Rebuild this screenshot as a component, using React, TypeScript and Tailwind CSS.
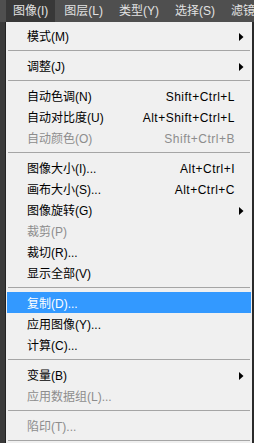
type Item = { label: string; shortcut?: string; sub?: boolean; disabled?: boolean; active?: boolean };

const groups: Item[][] = [
  [{ label: "模式(M)", sub: true }],
  [{ label: "调整(J)", sub: true }],
  [
    { label: "自动色调(N)", shortcut: "Shift+Ctrl+L" },
    { label: "自动对比度(U)", shortcut: "Alt+Shift+Ctrl+L" },
    { label: "自动颜色(O)", shortcut: "Shift+Ctrl+B", disabled: true },
  ],
  [
    { label: "图像大小(I)...", shortcut: "Alt+Ctrl+I" },
    { label: "画布大小(S)...", shortcut: "Alt+Ctrl+C" },
    { label: "图像旋转(G)", sub: true },
    { label: "裁剪(P)", disabled: true },
    { label: "裁切(R)..." },
    { label: "显示全部(V)" },
  ],
  [
    { label: "复制(D)...", active: true },
    { label: "应用图像(Y)..." },
    { label: "计算(C)..." },
  ],
  [
    { label: "变量(B)", sub: true },
    { label: "应用数据组(L)...", disabled: true },
  ],
  [{ label: "陷印(T)...", disabled: true }],
];

const tabs = ["图像(I)", "图层(L)", "类型(Y)", "选择(S)", "滤镜"];

function Arrow() {
  return (
    <svg width="5" height="8" viewBox="0 0 5 8" className="block">
      <path d="M0 0 L4.5 4 L0 8 Z" fill="#000" />
    </svg>
  );
}

function Row({ item }: { item: Item }) {
  const color = item.active ? "text-white" : item.disabled ? "text-[#8d8d8d]" : "text-[#000]";
  return (
    <div
      className={`mx-[1px] h-[21px] flex items-center pt-[2px] ${color} ${item.active ? "bg-[#3399ff]" : ""}`}
    >
      <span className="pl-[20px] flex-1 whitespace-nowrap">{item.label}</span>
      {item.shortcut && <span className="whitespace-nowrap tracking-[0.5px]">{item.shortcut}</span>}
      <span className="w-[16px] flex pl-[4px]">{item.sub && <Arrow />}</span>
    </div>
  );
}

function Separator() {
  return (
    <div className="h-[9px] flex items-center px-[2px]">
      <div className="h-px w-full bg-[#a5a5a5]" />
    </div>
  );
}

export default function App() {
  return (
    <div
      className="w-[254px] h-[443px] overflow-hidden bg-[#2c2c2c] text-[12px] leading-none"
      style={{ fontFamily: '"Liberation Sans", "Noto Sans CJK SC", sans-serif' }}
    >
      {/* menu bar */}
      <div className="h-[22px] bg-[#4f4f4f] flex pl-[6px] text-[#e2e2e2] whitespace-nowrap">
        {tabs.map((t, i) => (
          <div
            key={t}
            className={`h-full flex items-center px-[7px] mr-[2px] ${i === 0 ? "bg-[#383838]" : ""}`}
          >
            {t}
          </div>
        ))}
      </div>

      <div className="flex h-[421px]">
        <div className="w-[6px] bg-[#3a3a3a] border-r border-[#222]" />
        <div className="w-[246px] bg-[#f0f0f0] pt-[3px]">
          {groups.map((g, gi) => (
            <div key={gi}>
              {g.map((it) => (
                <Row key={it.label} item={it} />
              ))}
              <Separator />
            </div>
          ))}
        </div>
        <div className="w-[2px] bg-[#2a2a2a]" />
      </div>
    </div>
  );
}
